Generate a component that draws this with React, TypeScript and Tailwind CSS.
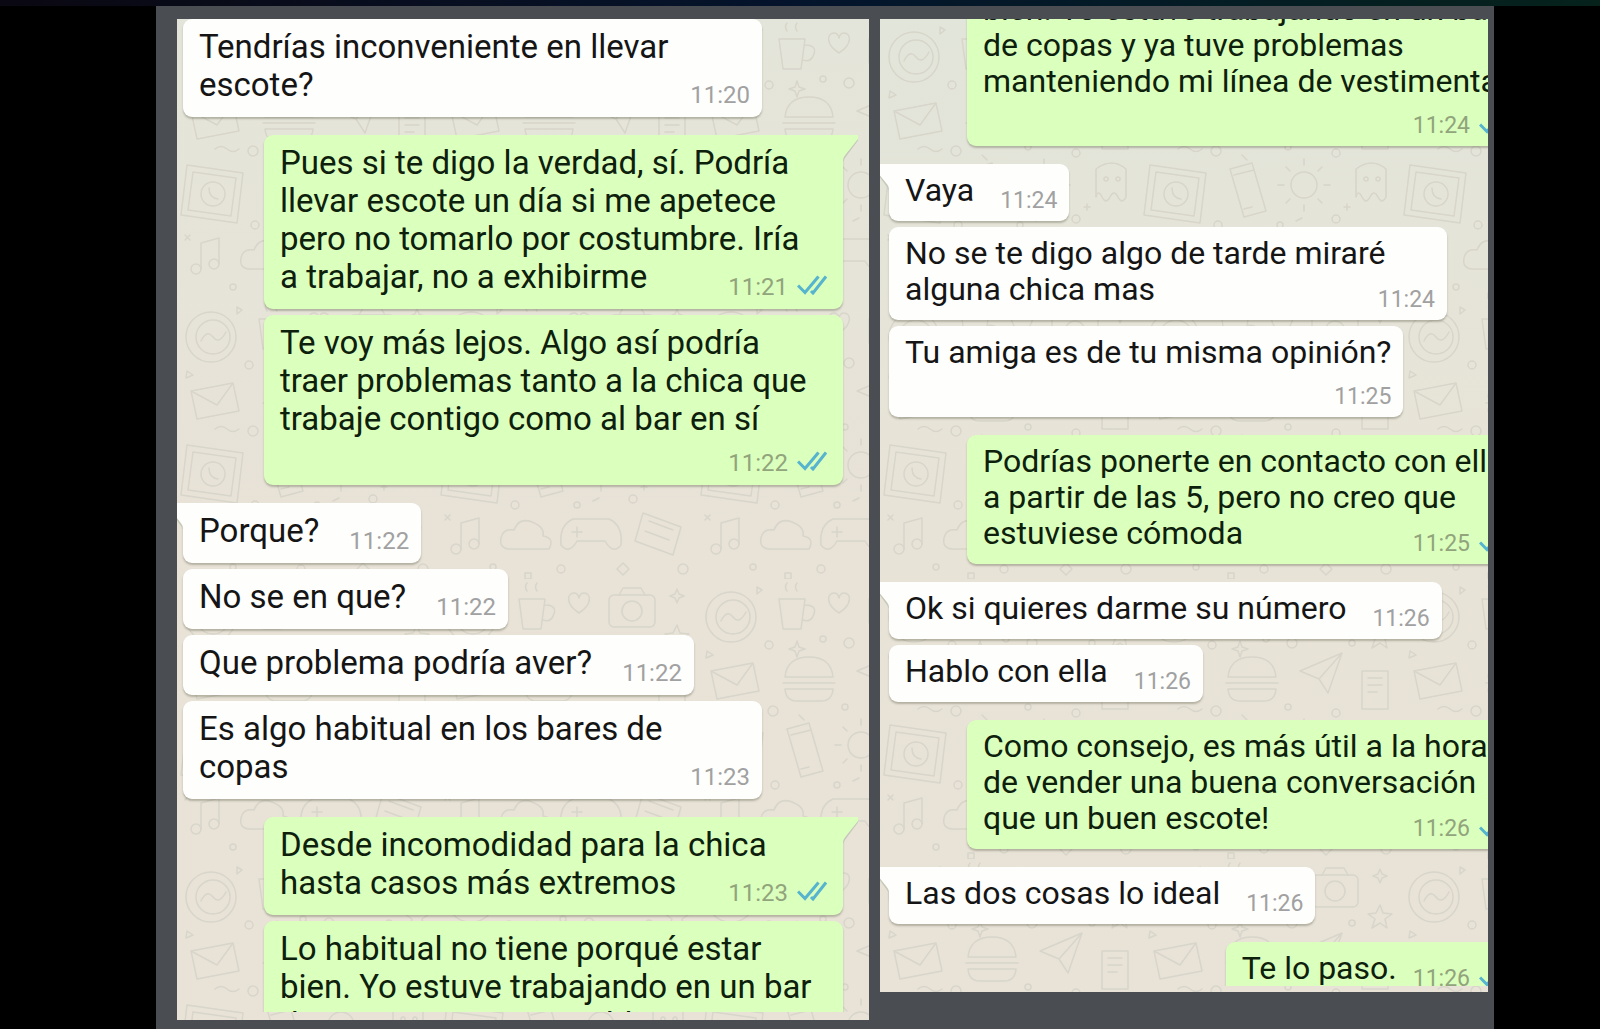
import { useId } from "react"
import clsx from "clsx"

interface Message {
  from: "them" | "me"
  text: string
  time: string
  // first message of a group, drawn with the little tail
  first?: boolean
  // takes the full bubble width
  full?: boolean
  // time sits on a row of its own
  below?: boolean
}

const leftChat: Message[] = [
  { from: "them", text: "Tendrías inconveniente en llevar\nescote?", time: "11:20", full: true },
  {
    from: "me",
    text: "Pues si te digo la verdad, sí. Podría\nllevar escote un día si me apetece\npero no tomarlo por costumbre. Iría\na trabajar, no a exhibirme",
    time: "11:21",
    first: true,
    full: true,
  },
  {
    from: "me",
    text: "Te voy más lejos. Algo así podría\ntraer problemas tanto a la chica que\ntrabaje contigo como al bar en sí",
    time: "11:22",
    full: true,
    below: true,
  },
  { from: "them", text: "Porque?", time: "11:22", first: true },
  { from: "them", text: "No se en que?", time: "11:22" },
  { from: "them", text: "Que problema podría aver?", time: "11:22" },
  { from: "them", text: "Es algo habitual en los bares de\ncopas", time: "11:23", full: true },
  { from: "me", text: "Desde incomodidad para la chica\nhasta casos más extremos", time: "11:23", first: true, full: true },
  {
    from: "me",
    text: "Lo habitual no tiene porqué estar\nbien. Yo estuve trabajando en un bar\nde copas y ya tuve problemas",
    time: "11:24",
    full: true,
    below: true,
  },
]

const rightChat: Message[] = [
  {
    from: "me",
    text: "bien. Yo estuve trabajando en un bar\nde copas y ya tuve problemas\nmanteniendo mi línea de vestimenta",
    time: "11:24",
    full: true,
    below: true,
  },
  { from: "them", text: "Vaya", time: "11:24", first: true },
  { from: "them", text: "No se te digo algo de tarde miraré\nalguna chica mas", time: "11:24", full: true },
  { from: "them", text: "Tu amiga es de tu misma opinión?", time: "11:25", below: true },
  {
    from: "me",
    text: "Podrías ponerte en contacto con ella\na partir de las 5, pero no creo que\nestuviese cómoda",
    time: "11:25",
    first: true,
    full: true,
  },
  { from: "them", text: "Ok si quieres darme su número", time: "11:26", first: true },
  { from: "them", text: "Hablo con ella", time: "11:26" },
  {
    from: "me",
    text: "Como consejo, es más útil a la hora\nde vender una buena conversación\nque un buen escote!",
    time: "11:26",
    first: true,
    full: true,
  },
  { from: "them", text: "Las dos cosas lo ideal", time: "11:26", first: true },
  { from: "me", text: "Te lo paso.", time: "11:26", first: true },
]

function Ticks() {
  return (
    <svg viewBox="0 0 30 20" className="mb-1 h-5 w-[30px] shrink-0" fill="none" stroke="#56b4cf" strokeWidth="3" aria-hidden="true">
      <path d="M1 10.5L8 17.5L21.5 1.5" />
      <path d="M14 16L16 18L29 1.5" />
    </svg>
  )
}

function Tail({ mine }: { mine: boolean }) {
  return (
    <svg
      viewBox="0 0 15 26"
      className={clsx("absolute top-0 h-[26px] w-[15px]", mine ? "left-full" : "right-full -scale-x-100")}
      aria-hidden="true"
    >
      <path d="M0 1L14.5 5L2.5 21Q0 24 0 26" fill="none" stroke="#c4c9b8" strokeWidth="1.5" />
      <path d="M0 0H15V4L2 20Q0 22.500 0 26Z" fill={mine ? "#dbffbd" : "#fefefd"} />
    </svg>
  )
}

function Wallpaper() {
  const id = useId()
  return (
    <svg className="absolute inset-0 h-full w-full" aria-hidden="true">
      <defs>
        <pattern id={id} width="260" height="280" patternUnits="userSpaceOnUse">
          <g fill="none" stroke="#d8d5ca" strokeWidth="1.500" strokeLinecap="round" strokeLinejoin="round">
            {/* globe, cup, heart */}
            <circle cx="34" cy="38" r="25" />
            <circle cx="36" cy="38" r="17" />
            <path d="M24 42q6-12 12-4t13-5" />
            <path d="M82 20h26l-4 30h-18zM108 26q12 0 9 9t-11 6M90 12q-3-4 0-8M100 12q-3-4 0-8" />
            <path d="M142 34c-14-9-12-20-5-20q4 0 5 5 1-5 5-5c7 0 9 11-5 20z" />
            {/* camera, star */}
            <rect x="172" y="16" width="46" height="32" rx="5" />
            <circle cx="195" cy="32" r="10" />
            <path d="M182 16l4-7h18l4 7" />
            <path d="M240 46l3 8 9 1-7 5 2 9-7-5-8 5 3-9-7-5 8-1z" />
            {/* envelope, burger, plane */}
            <path d="M14 92l42-8 6 28-42 8zM14 92l26 14 16-22" />
            <path d="M88 98q2-20 24-20t24 20zM86 104h52M88 110h48q-1 12-12 12h-24q-11 0-12-12z" />
            <path d="M160 92l42-18-14 40-9-14zM179 100l23-26" />
            <path d="M222 92h26v38h-26zM228 99h14M228 106h14M228 113h9" />
            {/* picture frame, phone, sun */}
            <path d="M10 146l56 8-6 50-56-8zM16 153l43 6-5 38-43-6z" />
            <circle cx="36" cy="175" r="12" />
            <path d="M32 169q0 10 9 11" />
            <path d="M90 150l22-6 14 48-22 6zM94 156l20-5M104 190l8-2" />
            <circle cx="164" cy="166" r="13" />
            <path d="M164 146v-6M164 186v6M144 166h-6M184 166h6M150 152l-4-4M178 180l4 4M178 152l4-4M150 180l-4 4" />
            <path d="M216 150q16-12 30 0v28q-4 8-8 0t-8 0-8 0-6 0z" />
            <circle cx="226" cy="160" r="2" />
            <circle cx="238" cy="160" r="2" />
            {/* note, cloud, gamepad */}
            <path d="M24 250v-26l18-5v26" />
            <circle cx="19" cy="250" r="5" />
            <circle cx="37" cy="245" r="5" />
            <path d="M72 250q-10-1-8-11t13-8q5-13 18-8t11 14q12 2 6 13z" />
            <path d="M136 220h36q14 6 12 26-8 10-16-4h-28q-8 14-16 4-2-20 12-26zM140 228v10M135 233h10" />
            <path d="M206 214l38 14-8 28-38-14zM212 222l24 9M208 232l24 9" />
            {/* filler */}
            <circle cx="72" cy="66" r="4" />
            <circle cx="126" cy="60" r="3" />
            <circle cx="152" cy="64" r="5" />
            <circle cx="212" cy="64" r="3" />
            <circle cx="76" cy="132" r="5" />
            <circle cx="148" cy="128" r="3" />
            <circle cx="196" cy="134" r="4" />
            <circle cx="78" cy="206" r="4" />
            <circle cx="140" cy="206" r="3" />
            <circle cx="196" cy="200" r="4" />
            <circle cx="56" cy="268" r="3" />
            <circle cx="124" cy="270" r="4" />
            <circle cx="246" cy="270" r="5" />
            <path d="M10 72l6 4-7 3zM100 62l2 6 6 2-6 2-2 6-2-6-6-2 6-2zM180 270l6-6 6 6-6 6zM8 216l5 5M13 216l-5 5M204 188h6M207 185v6" />
            <path d="M60 8l5 3-5 4zM240 10l2 5 5 2-5 2-2 5-2-5-5-2 5-2zM38 130q6-5 12 0t12 0M102 136l5 5M156 202l6-3M88 274h6v6h-6z" />
          </g>
        </pattern>
      </defs>
      <rect width="100%" height="100%" fill={`url(#${id})`} />
    </svg>
  )
}

function Bubble({ message, small }: { message: Message; small?: boolean }) {
  const { from, text, time, first, full, below } = message
  const mine = from === "me"
  const lines = text.split("\n")
  // the last line shares its row with the time
  const head = below ? lines : lines.slice(0, -1)
  const last = below ? "" : lines[lines.length - 1]

  return (
    <li
      className={clsx(
        "relative shrink-0 rounded-[9px] pl-4 whitespace-nowrap shadow-[0_2px_2px_rgba(70,75,50,0.32)]",
        small ? "pt-2 pb-2 text-[32px] leading-9" : "pt-[9px] pb-2.5 text-[33px] leading-[38px]",
        mine ? "mr-[26px] self-end bg-[#dbffbd] pr-4 text-[#0d200c]" : "self-start bg-[#fefefd] pr-3 text-[#151515]",
        !mine && (small ? "ml-[9px]" : "ml-1.5"),
        first && (mine ? "rounded-tr-none" : "rounded-tl-none"),
        first ? "mt-[18px]" : "mt-1.5 first:mt-0",
        full && (small ? "w-[558px]" : "w-[579px]"),
      )}
    >
      {first && <Tail mine={mine} />}
      {head.map((line) => (
        <p key={line}>{line}</p>
      ))}
      <div className={clsx("flex items-end", below ? "justify-end" : "justify-between", below && (small ? "pt-[15px]" : "pt-[13px]"))}>
        {last && <p className={small ? "pb-[5px]" : "pb-[3px]"}>{last}</p>}
        <span
          className={clsx(
            "flex shrink-0 items-end gap-[9px]",
            !below && (mine ? "pl-4" : small ? "pl-[26px]" : "pl-[30px]"),
          )}
        >
          <time className={clsx("leading-6", small ? "text-[23px]" : "text-[24px]", mine ? "text-[#91a47c]" : "text-[#a1a1a1]")}>
            {time}
          </time>
          {mine && <Ticks />}
        </span>
      </div>
    </li>
  )
}

export default function App() {
  return (
    <div className="flex h-screen flex-col overflow-hidden bg-black font-[Roboto,sans-serif]">
      <div className="h-1.5 shrink-0 bg-linear-to-r from-[#0a0812] via-[#04142c] to-[#06221b]" />
      <main className="mr-[106px] ml-[156px] grid min-h-0 flex-1 grid-cols-[692fr_608fr] gap-[11px] bg-[#4a4e53] pt-[13px] pr-1.5 pl-[21px]">
        <section className="relative mb-[9px] min-h-0 overflow-hidden bg-linear-to-b from-[#e4e5da] via-[#e8e2d7] to-[#e8e2d7] pb-2">
          <Wallpaper />
          <ul className="relative flex h-full flex-col overflow-hidden">
            {leftChat.map((message, i) => (
              <Bubble key={i} message={message} />
            ))}
          </ul>
        </section>
        <section className="relative mb-[37px] min-h-0 overflow-hidden bg-linear-to-b from-[#e2e5da] via-[#e8e3d7] to-[#e8e2d7] pb-1.5">
          <Wallpaper />
          {/* scrolled a little, and wider than its panel, so the right side is cut */}
          <div className="relative h-full overflow-hidden">
            <ul className="-mt-9 -mr-[63px] flex flex-col">
              {rightChat.map((message, i) => (
                <Bubble key={i} message={message} small />
              ))}
            </ul>
          </div>
        </section>
      </main>
    </div>
  )
}
